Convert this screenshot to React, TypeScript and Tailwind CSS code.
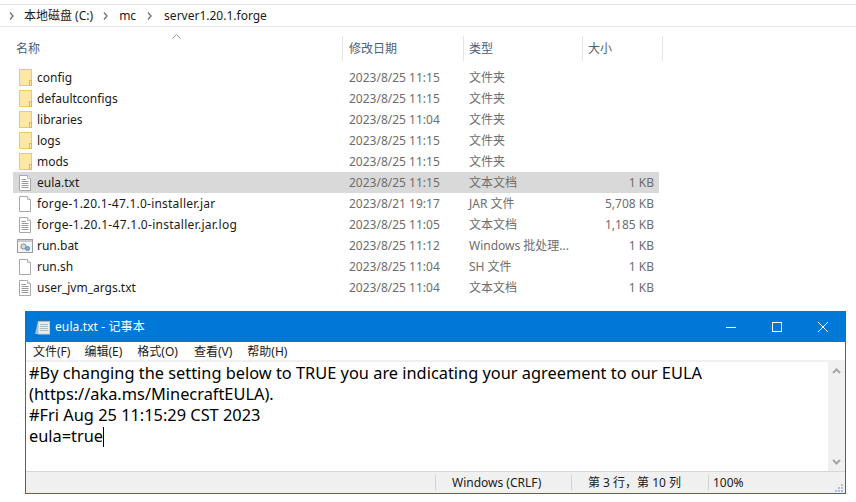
import React from "react";

const FONT = "[font-family:'Noto_Sans','Noto_Sans_CJK_SC',sans-serif]";

function FolderIcon() {
  return (
    <svg width="13" height="17" viewBox="0 0 13 17" className="ml-[2px] block">
      <rect x="0.5" y="0.5" width="12" height="16" fill="#fce7a6" stroke="#eecb5e" />
      <rect x="10.5" y="11.5" width="2" height="5" fill="#fce7a6" stroke="#e2b93f" />
    </svg>
  );
}

function DocIcon({ lines }: { lines: boolean }) {
  return (
    <svg width="12" height="16" viewBox="0 0 12 16" className="ml-[2px] block">
      <path d="M0.5 0.5H8.5L11.5 3.5V15.5H0.5Z" fill="#fff" stroke="#a8a8a8" />
      <path d="M8.5 0.5V3.5H11.5" fill="#f0f0f0" stroke="#b8b8b8" />
      {lines && (
        <path d="M2.5 4.5H7M2.5 6.5H9.5M2.5 8.5H9.5M2.5 10.5H9.5M2.5 12.5H9.5" stroke="#9a9a9a" />
      )}
    </svg>
  );
}

function BatIcon() {
  return (
    <svg width="16" height="14" viewBox="0 0 16 14" className="block">
      <rect x="0.5" y="0.5" width="15" height="13" fill="#f4f4f4" stroke="#9c9c9c" />
      <rect x="1" y="1" width="14" height="2" fill="#c9c9c9" />
      <circle cx="6.5" cy="7.5" r="2.6" fill="#d8d8d8" stroke="#8a8a8a" />
      <circle cx="10.5" cy="9.5" r="2" fill="#7fb2dc" stroke="#4f8ec2" />
    </svg>
  );
}

function NotepadIcon() {
  return (
    <svg width="16" height="16" viewBox="0 0 16 16" className="block">
      <path d="M0 15L3 2H15V15Z" fill="#9fc4dd" />
      <rect x="3.5" y="2.5" width="11" height="12.5" fill="#e6eef2" stroke="#c4d3da" />
      <path d="M5 5.5H13M5 7.5H13M5 9.5H13M5 11.5H13" stroke="#a9bdc8" />
      <path d="M3.5 1.5H14.5" stroke="#5b6b78" strokeWidth="2" strokeDasharray="1 1" />
    </svg>
  );
}

type Kind = "folder" | "txt" | "blank" | "bat";
const rows: { kind: Kind; name: string; date: string; type: string; size?: string; sel?: boolean; nameClass?: string }[] = [
  { kind: "folder", name: "config", date: "2023/8/25 11:15", type: "文件夹" },
  { kind: "folder", name: "defaultconfigs", date: "2023/8/25 11:15", type: "文件夹" },
  { kind: "folder", name: "libraries", date: "2023/8/25 11:04", type: "文件夹" },
  { kind: "folder", name: "logs", date: "2023/8/25 11:15", type: "文件夹" },
  { kind: "folder", name: "mods", date: "2023/8/25 11:15", type: "文件夹" },
  { kind: "txt", name: "eula.txt", date: "2023/8/25 11:15", type: "文本文档", size: "1 KB", sel: true },
  { kind: "blank", name: "forge-1.20.1-47.1.0-installer.jar", date: "2023/8/21 19:17", type: "JAR 文件", size: "5,708 KB", nameClass: "tracking-[0.22px]" },
  { kind: "txt", name: "forge-1.20.1-47.1.0-installer.jar.log", date: "2023/8/25 11:05", type: "文本文档", size: "1,185 KB", nameClass: "tracking-[0.27px]" },
  { kind: "bat", name: "run.bat", date: "2023/8/25 11:12", type: "Windows 批处理...", size: "1 KB" },
  { kind: "blank", name: "run.sh", date: "2023/8/25 11:04", type: "SH 文件", size: "1 KB" },
  { kind: "txt", name: "user_jvm_args.txt", date: "2023/8/25 11:04", type: "文本文档", size: "1 KB" },
];

function Chevron() {
  return (
    <svg width="5" height="8" viewBox="0 0 5 8" className="block">
      <path d="M1 0.5L4 4L1 7.5" fill="none" stroke="#777" strokeWidth="1.4" />
    </svg>
  );
}

function Row({ r }: { r: (typeof rows)[number] }) {
  return (
    <div className={`flex h-[21px] items-center ${r.sel ? "bg-[#d9d9d9]" : ""}`}>
      <div className="flex w-[329px] items-center">
        <div className="w-[24px] shrink-0 pl-[4px]">
          {r.kind === "folder" && <FolderIcon />}
          {r.kind === "txt" && <DocIcon lines />}
          {r.kind === "blank" && <DocIcon lines={false} />}
          {r.kind === "bat" && <BatIcon />}
        </div>
        <span className={`text-[12px] text-[#1a1a1a] whitespace-nowrap ${r.nameClass ?? ""}`}>{r.name}</span>
      </div>
      <div className="w-[120px] pl-[7px] text-[12px] text-[#6d6d6d] whitespace-nowrap">{r.date}</div>
      <div className="w-[120px] pl-[7px] text-[12px] text-[#6d6d6d] whitespace-nowrap">{r.type}</div>
      <div className="flex-1 pr-[5px] text-right text-[12px] text-[#6d6d6d] whitespace-nowrap">{r.size}</div>
    </div>
  );
}

function Explorer() {
  return (
    <div>
      <div className="mt-[4px] flex h-[23px] items-center border-y border-[#e5e5e5] pl-[9px] text-[12px] text-[#1a1a1a]">
        <Chevron />
        <span className="ml-[10px]">本地磁盘 (C:)</span>
        <span className="ml-[10px]"><Chevron /></span>
        <span className="ml-[11px]">mc</span>
        <span className="ml-[11px]"><Chevron /></span>
        <span className="ml-[12px]">server1.20.1.forge</span>
      </div>
      <div className="relative mt-[9px] ml-[13px] flex h-[25px] w-[650px] items-center text-[12px] text-[#4c607a]">
        <svg width="9" height="5" viewBox="0 0 9 5" className="absolute left-[159px] top-[-2px]">
          <path d="M0.5 4.5L4.5 0.5L8.5 4.5" fill="none" stroke="#9a9a9a" />
        </svg>
        <div className="w-[329px] pl-[3px]">名称</div>
        <div className="flex h-full w-[121px] items-center border-l border-[#e5e5e5] pl-[6px]">修改日期</div>
        <div className="flex h-full w-[119px] items-center border-l border-[#e5e5e5] pl-[5px]">类型</div>
        <div className="flex h-full w-[81px] items-center border-x border-[#e5e5e5] pl-[5px]">大小</div>
      </div>
      <div className="mt-[6px] ml-[13px] w-[646px]">
        {rows.map((r) => (
          <Row key={r.name} r={r} />
        ))}
      </div>
    </div>
  );
}

function Notepad() {
  return (
    <div className="mt-[13px] ml-[25px] flex h-[183px] w-[821px] flex-col border border-[#0078d7] bg-white">
      <div className="flex h-[30px] shrink-0 items-center bg-[#0078d7] text-white">
        <div className="ml-[9px]"><NotepadIcon /></div>
        <span className="ml-[4px] text-[12px] tracking-[0.1px]">eula.txt - 记事本</span>
        <div className="ml-auto flex items-center">
          <svg width="46" height="30" viewBox="0 0 46 30" className="block">
            <path d="M19 15.5H29" stroke="#fff" />
          </svg>
          <svg width="46" height="30" viewBox="0 0 46 30" className="block">
            <rect x="19.5" y="10.5" width="9" height="9" fill="none" stroke="#fff" />
          </svg>
          <svg width="46" height="30" viewBox="0 0 46 30" className="block">
            <path d="M19 10L29 20M29 10L19 20" stroke="#fff" />
          </svg>
        </div>
      </div>
      <div className="flex h-[18px] shrink-0 items-center pl-[7px] pt-[2px] text-[12px] text-[#1a1a1a]">
        <span>文件(F)</span>
        <span className="ml-[14px]">编辑(E)</span>
        <span className="ml-[15px]">格式(O)</span>
        <span className="ml-[16px]">查看(V)</span>
        <span className="ml-[15px]">帮助(H)</span>
      </div>
      <div className="flex min-h-0 flex-1 border-t-2 border-[#f0f0f0]">
        <div className="flex-1 pl-[3px] pt-[1px] text-[16.38px] leading-[21px] text-black">
          <div>#By changing the setting below to TRUE you are indicating your agreement to our EULA</div>
          <div>(https://aka.ms/MinecraftEULA).</div>
          <div>#Fri Aug 25 11:15:29 CST 2023</div>
          <div className="flex items-center">
            eula=true
            <span className="inline-block h-[20px] w-[1px] bg-black" />
          </div>
        </div>
        <div className="flex w-[17px] shrink-0 flex-col items-center justify-between bg-[#f0f0f0] py-[6px]">
          <svg width="9" height="6" viewBox="0 0 9 6" className="block">
            <path d="M1 5L4.5 1.5L8 5" fill="none" stroke="#a6a6a6" strokeWidth="2" />
          </svg>
          <svg width="9" height="6" viewBox="0 0 9 6" className="block">
            <path d="M1 1L4.5 4.5L8 1" fill="none" stroke="#a6a6a6" strokeWidth="2" />
          </svg>
        </div>
      </div>
      <div className="relative flex h-[22px] shrink-0 items-center border-t border-[#d7d7d7] bg-[#f0f0f0] pl-[409px] text-[12px] text-[#1a1a1a]">
        <div className="flex h-[15px] w-[136px] items-center border-l border-[#d2d2d2] pl-[16px]">Windows (CRLF)</div>
        <div className="flex h-[15px] w-[137px] items-center border-l border-[#d2d2d2] pl-[16px]">第 3 行，第 10 列</div>
        <div className="flex h-[15px] items-center border-l border-[#d2d2d2] pl-[4px]">100%</div>
        <svg width="9" height="9" viewBox="0 0 9 9" className="absolute bottom-[1px] right-[1px]">
          <path d="M6 1h2v2H6zM3 4h2v2H3zM6 4h2v2H6zM0 7h2v2H0zM3 7h2v2H3zM6 7h2v2H6z" fill="#bdbdbd" />
        </svg>
      </div>
    </div>
  );
}

export default function App() {
  return (
    <div className={`h-[502px] w-[856px] overflow-hidden bg-white ${FONT}`}>
      <Explorer />
      <Notepad />
    </div>
  );
}
